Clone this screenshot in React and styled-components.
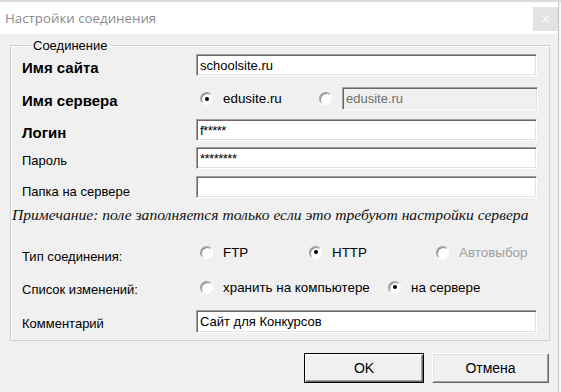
import React from "react";
import styled, { createGlobalStyle } from "styled-components";

const GlobalStyle = createGlobalStyle`
  html, body {
    margin: 0;
    padding: 0;
    background: #f7f7f7;
  }
  body {
    font-family: "Liberation Sans", Arial, sans-serif;
    font-size: 13px;
    color: #000;
  }
`;

const Page = styled.div`
  width: 561px;
  height: 392px;
  overflow: hidden;
  display: flex;
  flex-direction: column;
`;

const TopStrip = styled.div`
  height: 2px;
  background: #dadada;
`;

const Window = styled.div`
  width: 558px;
  flex: 1;
  display: flex;
  flex-direction: column;
  border-right: 1px solid #c4c4c4;
`;

const TitleBar = styled.div`
  height: 32px;
  background: #fff;
  display: flex;
  align-items: center;
  justify-content: space-between;
  padding-left: 5px;
`;

const Title = styled.div`
  font-family: "Open Sans", "Noto Sans", sans-serif;
  font-size: 13.3px;
  color: #8c8c8c;
`;

const CloseButton = styled.div`
  width: 25px;
  height: 24px;
  margin-top: 5px;
  align-self: flex-start;
  background: #e3e3e3;
  color: #f6f6f6;
  font-size: 13px;
  display: flex;
  align-items: center;
  justify-content: center;
`;

const Body = styled.div`
  flex: 1;
  background: #f0f0f0;
  padding: 4px 0 0 10px;
  display: flex;
  flex-direction: column;
`;

const Group = styled.fieldset`
  margin: 0;
  width: 540px;
  height: 303px;
  box-sizing: border-box;
  padding: 0 0 0 11px;
  border: 1px solid #d0d0d0;
  box-shadow: inset 1px 1px 0 #fff;
  display: flex;
  flex-direction: column;
`;

const Legend = styled.legend`
  margin-left: 9px;
  padding: 0 2px;
  line-height: 15px;
`;

const Row = styled.div`
  display: flex;
  align-items: center;
  height: ${(p) => p.$h || 22}px;
  margin-top: ${(p) => p.$mt || 0}px;
`;

const Label = styled.div`
  width: 174px;
  flex: none;
  font-weight: ${(p) => (p.$bold ? 700 : 400)};
  font-size: ${(p) => (p.$bold ? 15 : 13)}px;
  padding-top: ${(p) => p.$shift || 0}px;
`;

const Input = styled.div`
  width: ${(p) => p.$w || 341}px;
  height: 100%;
  box-sizing: border-box;
  border: 1px solid;
  border-color: #a0a0a0 #fff #fff #a0a0a0;
  box-shadow: inset 1px 1px 0 #696969, inset -1px -1px 0 #e3e3e3;
  background: ${(p) => (p.$disabled ? "#f0f0f0" : "#fff")};
  color: ${(p) => (p.$disabled ? "#6d6d6d" : "#000")};
  display: flex;
  align-items: center;
  padding-left: 3px;
  font-size: 13px;
  letter-spacing: ${(p) => (p.$mask ? "-0.5px" : "0")};
`;

const Controls = styled.div`
  display: flex;
  align-items: center;
  padding-left: 4px;
`;

const Option = styled.div`
  display: flex;
  align-items: center;
  width: ${(p) => (p.$w ? `${p.$w}px` : "auto")};
  color: ${(p) => (p.$disabled ? "#a0a0a0" : "#000")};
  font-size: 13.4px;
  flex: none;
`;

const Radio = styled.span`
  width: 13px;
  height: 13px;
  box-sizing: border-box;
  border-radius: 50%;
  border: 1px solid;
  border-color: #a0a0a0 #fff #fff #a0a0a0;
  box-shadow: inset 1px 1px 0 #8a8a8a;
  background: #fff;
  margin-right: 10px;
  display: flex;
  align-items: center;
  justify-content: center;
  flex: none;

  &::after {
    content: "";
    width: 4px;
    height: 4px;
    border-radius: 50%;
    background: ${(p) => (p.$on ? "#000" : "transparent")};
  }
`;

const Note = styled.div`
  font-family: "Liberation Serif", "Times New Roman", serif;
  font-style: italic;
  font-size: 15.6px;
  margin-left: -10px;
  margin-top: 8px;
  height: 17px;
  line-height: 17px;
  color: #111;
  white-space: nowrap;
`;

const Footer = styled.div`
  display: flex;
  justify-content: flex-end;
  gap: 8px;
  padding: 12px 9px 0 0;
`;

const Button = styled.div`
  width: ${(p) => p.$w}px;
  height: 30px;
  box-sizing: border-box;
  background: #f0f0f0;
  border: 1px solid;
  border-color: ${(p) => (p.$default ? "#000" : "#fff #696969 #696969 #fff")};
  box-shadow: ${(p) =>
    p.$default
      ? "inset 1px 1px 0 #fff, inset -1px -1px 0 #696969, inset -2px -2px 0 #a0a0a0"
      : "inset 1px 1px 0 #e3e3e3, inset -1px -1px 0 #a0a0a0"};
  display: flex;
  align-items: center;
  justify-content: center;
  font-size: 14px;
`;

export default function App() {
  return (
    <>
      <GlobalStyle />
      <Page>
        <TopStrip />
        <Window>
          <TitleBar>
            <Title>Настройки соединения</Title>
            <CloseButton>✕</CloseButton>
          </TitleBar>
          <Body>
            <Group>
              <Legend>Соединение</Legend>
              <Row $mt={1}>
                <Label $bold $shift={5}>Имя сайта</Label>
                <Input>schoolsite.ru</Input>
              </Row>
              <Row $h={23} $mt={11}>
                <Label $bold $shift={3}>Имя сервера</Label>
                <Controls>
                  <Option $w={119}>
                    <Radio $on />
                    edusite.ru
                  </Option>
                  <Option>
                    <Radio />
                  </Option>
                </Controls>
                <Input $w={196} $disabled>edusite.ru</Input>
              </Row>
              <Row $mt={9}>
                <Label $bold $shift={5}>Логин</Label>
                <Input $mask>f*****</Input>
              </Row>
              <Row $mt={6}>
                <Label $shift={4}>Пароль</Label>
                <Input $mask>********</Input>
              </Row>
              <Row $mt={7}>
                <Label $shift={8}>Папка на сервере</Label>
                <Input />
              </Row>
              <Note>Примечание: поле заполняется только если это требуют настройки сервера</Note>
              <Row $mt={18}>
                <Label $shift={9}>Тип соединения:</Label>
                <Controls>
                  <Option $w={109}>
                    <Radio />
                    FTP
                  </Option>
                  <Option $w={127}>
                    <Radio $on />
                    HTTP
                  </Option>
                  <Option $disabled>
                    <Radio />
                    Автовыбор
                  </Option>
                </Controls>
              </Row>
              <Row $mt={13}>
                <Label $shift={5}>Список изменений:</Label>
                <Controls>
                  <Option $w={188}>
                    <Radio />
                    хранить на компьютере
                  </Option>
                  <Option>
                    <Radio $on />
                    на сервере
                  </Option>
                </Controls>
              </Row>
              <Row $h={23} $mt={12}>
                <Label $shift={4}>Комментарий</Label>
                <Input>Сайт для Конкурсов</Input>
              </Row>
            </Group>
            <Footer>
              <Button $default $w={120}>OK</Button>
              <Button $w={117}>Отмена</Button>
            </Footer>
          </Body>
        </Window>
      </Page>
    </>
  );
}
